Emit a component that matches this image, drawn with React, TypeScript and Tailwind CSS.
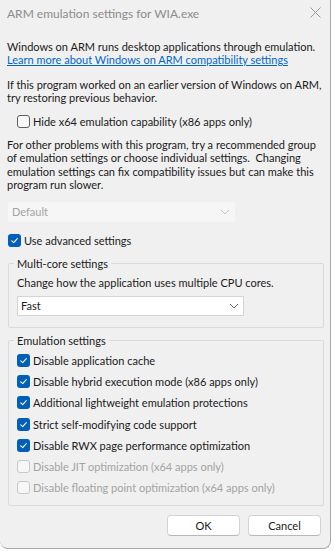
import React from "react";

const font = "font-['Lato',sans-serif]";

function Check({ checked, disabled }: { checked?: boolean; disabled?: boolean }) {
  if (checked) {
    return (
      <span className="flex h-[13px] w-[13px] shrink-0 items-center justify-center rounded-[3px] bg-[#005fb8]">
        <svg width="9" height="9" viewBox="0 0 9 9" fill="none">
          <path d="M1.8 4.8 L3.7 6.6 L7.3 2.6" stroke="white" strokeWidth="1.1" strokeLinecap="round" strokeLinejoin="round" />
        </svg>
      </span>
    );
  }
  return (
    <span
      className={
        disabled
          ? "h-[13px] w-[13px] shrink-0 rounded-[3px] border border-[#c9c9c9] bg-[#f7f7f7]"
          : "h-[13px] w-[13px] shrink-0 rounded-[3px] border border-[#5f5f5f] bg-[#f9f9f9]"
      }
    />
  );
}

function CheckRow({ label, checked, disabled }: { label: string; checked?: boolean; disabled?: boolean }) {
  return (
    <div className="flex h-[13px] items-center gap-[3px]">
      <Check checked={checked} disabled={disabled} />
      <span className={disabled ? "whitespace-nowrap text-[#a3a3a3]" : "whitespace-nowrap"}>{label}</span>
    </div>
  );
}

function Chevron({ color }: { color: string }) {
  return (
    <svg width="10" height="6" viewBox="0 0 10 6" fill="none">
      <path d="M1 1 L5 5 L9 1" stroke={color} strokeWidth="1" />
    </svg>
  );
}

const emulation = [
  { label: "Disable application cache", checked: true },
  { label: "Disable hybrid execution mode (x86 apps only)", checked: true },
  { label: "Additional lightweight emulation protections", checked: true },
  { label: "Strict self-modifying code support", checked: true },
  { label: "Disable RWX page performance optimization", checked: true },
  { label: "Disable JIT optimization (x64 apps only)", disabled: true },
  { label: "Disable floating point optimization (x64 apps only)", disabled: true },
];

export default function App() {
  return (
    <div className={`h-[551px] w-[334px] overflow-hidden bg-white ${font} text-[11px] leading-[13px] text-[#1a1a1a]`}>
      <div className="flex h-[549px] w-[331px] flex-col rounded-b-[8px] border-r border-b border-[#a8a8a8] bg-[#f0f0f0]">
        {/* title bar */}
        <div className="flex h-[27px] shrink-0 items-center justify-between pl-[7px] pr-[9px]">
          <span className="whitespace-nowrap text-[12px] leading-[15px] text-[#8c8c8c]">ARM emulation settings for WIA.exe</span>
          <svg width="11" height="11" viewBox="0 0 11 11" className="-mt-[3px]">
            <path d="M0.5 0.5 L10.5 10.5 M10.5 0.5 L0.5 10.5" stroke="#9a9a9a" strokeWidth="1" />
          </svg>
        </div>

        <div className="flex flex-col whitespace-nowrap pl-[7px] pr-[7px] pt-[13px]">
          <p>
            Windows on ARM runs desktop applications through emulation.
            <br />
            <a className="text-[#0066cc] underline">Learn more about Windows on ARM compatibility settings</a>
          </p>

          <p className="mt-[12px]">
            If this program worked on an earlier version of Windows on ARM,
            <br />
            try restoring previous behavior.
          </p>

          <div className="ml-[10px] mt-[11px]">
            <CheckRow label="Hide x64 emulation capability (x86 apps only)" />
          </div>

          <p className="mt-[10px] leading-[13.4px]">
            For other problems with this program, try a recommended group
            <br />
            of emulation settings or choose individual settings.&nbsp; Changing
            <br />
            emulation settings can fix compatibility issues but can make this
            <br />
            program run slower.
          </p>

          <div className="ml-[1px] mt-[10px] flex h-[20px] w-[227px] items-center justify-between bg-[#f6f6f6] pl-[4px] pr-[5px] text-[#a3a3a3]">
            <span>Default</span>
            <Chevron color="#c4c4c4" />
          </div>

          <div className="ml-[1px] mt-[12px]">
            <CheckRow label="Use advanced settings" checked />
          </div>

          <fieldset className="ml-[1px] mt-[10px] w-[316px] rounded-[2px] border border-[#dadada] pb-[11px] pl-[8px] pr-[8px] pt-[6px]">
            <legend className="-ml-[3px] px-[3px]">Multi-core settings</legend>
            <p>Change how the application uses multiple CPU cores.</p>
            <div className="mt-[7px] flex h-[20px] w-[227px] items-center justify-between border border-[#d4d4d4] bg-white pl-[3px] pr-[4px]">
              <span>Fast</span>
              <Chevron color="#666" />
            </div>
          </fieldset>

          <fieldset className="ml-[1px] mt-[6px] w-[316px] rounded-[2px] border border-[#dadada] pb-[11px] pl-[8px] pr-[8px] pt-[7px]">
            <legend className="-ml-[3px] px-[3px]">Emulation settings</legend>
            <div className="flex flex-col gap-[8.3px]">
              {emulation.map((e) => (
                <CheckRow key={e.label} label={e.label} checked={e.checked} disabled={e.disabled} />
              ))}
            </div>
          </fieldset>

          <div className="mt-[9px] flex justify-end gap-[8px] pr-[2px]">
            <button className="h-[21px] w-[73px] rounded-[4px] border border-[#d3d3d3] border-b-[#b8b8b8] bg-white">OK</button>
            <button className="h-[21px] w-[73px] rounded-[4px] border border-[#d3d3d3] border-b-[#b8b8b8] bg-white">Cancel</button>
          </div>
        </div>
      </div>
    </div>
  );
}
